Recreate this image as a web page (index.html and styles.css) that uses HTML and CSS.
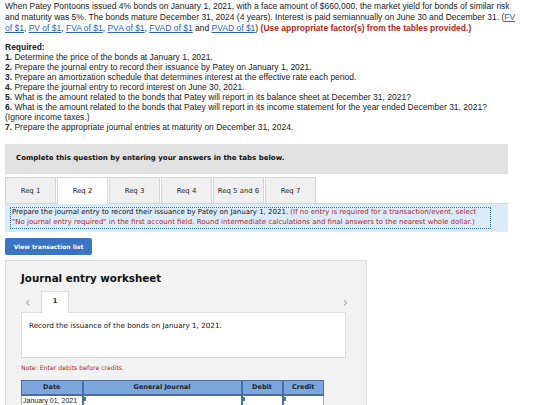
FILE: index.html
```html
<!DOCTYPE html>
<html lang="en">
<head>
    <meta charset="UTF-8">
    <meta name="viewport" content="width=device-width, initial-scale=1.0">
    <title>Bonds - Patey Pontoons</title>
    <link rel="stylesheet" href="styles.css">
</head>
<body>
    <div class="question">
        <p class="intro">
            When Patey Pontoons issued 4% bonds on January 1, 2021, with a face amount of $660,000, the market yield for bonds of similar risk
            and maturity was 5%. The bonds mature December 31, 2024 (4 years). Interest is paid semiannually on June 30 and December 31. (<a href="#">FV
            of $1</a>, <a href="#">PV of $1</a>, <a href="#">FVA of $1</a>, <a href="#">PVA of $1</a>, <a href="#">FVAD of $1</a> and <a href="#">PVAD of $1</a>) <strong class="warn">(Use appropriate factor(s) from the tables provided.)</strong>
        </p>

        <div class="required">
            <strong>Required:</strong>
            <ol>
                <li><b>1.</b> Determine the price of the bonds at January 1, 2021.</li>
                <li><b>2.</b> Prepare the journal entry to record their issuance by Patey on January 1, 2021.</li>
                <li><b>3.</b> Prepare an amortization schedule that determines interest at the effective rate each period.</li>
                <li><b>4.</b> Prepare the journal entry to record interest on June 30, 2021.</li>
                <li><b>5.</b> What is the amount related to the bonds that Patey will report in its balance sheet at December 31, 2021?</li>
                <li><b>6.</b> What is the amount related to the bonds that Patey will report in its income statement for the year ended December 31, 2021?<br>(Ignore income taxes.)</li>
                <li><b>7.</b> Prepare the appropriate journal entries at maturity on December 31, 2024.</li>
            </ol>
        </div>
    </div>

    <div class="answer">
        <div class="complete">Complete this question by entering your answers in the tabs below.</div>

        <div class="tabs">
            <button class="tab">Req 1</button>
            <button class="tab active">Req 2</button>
            <button class="tab">Req 3</button>
            <button class="tab">Req 4</button>
            <button class="tab">Req 5 and 6</button>
            <button class="tab">Req 7</button>
        </div>

        <div class="instructions">
            <div class="instructions-inner">
                Prepare the journal entry to record their issuance by Patey on January 1, 2021. <span class="red">(If no entry is required for a transaction/event, select<br>
                "No journal entry required" in the first account field. Round intermediate calculations and final answers to the nearest whole dollar.)</span>
            </div>
        </div>

        <button class="btn-list">View transaction list</button>

        <div class="worksheet">
            <h2>Journal entry worksheet</h2>

            <div class="ws-nav">
                <span class="arrow">&lsaquo;</span>
                <span class="ws-tab">1</span>
                <span class="arrow right">&rsaquo;</span>
            </div>

            <div class="ws-body">Record the issuance of the bonds on January 1, 2021.</div>

            <p class="note">Note: Enter debits before credits.</p>

            <table class="journal">
                <thead>
                    <tr>
                        <th class="col-date">Date</th>
                        <th class="col-account">General Journal</th>
                        <th class="col-num">Debit</th>
                        <th class="col-num">Credit</th>
                    </tr>
                </thead>
                <tbody>
                    <tr>
                        <td class="col-date">January 01, 2021</td>
                        <td class="cell-input"></td>
                        <td class="cell-input"></td>
                        <td class="cell-input"></td>
                    </tr>
                </tbody>
            </table>
        </div>
    </div>
</body>
</html>
```

FILE: styles.css
```css
:root {
    --text: #222;
    --link: #2a64b8;
    --red: #b0281e;
    --tab-bg: #f0f0f0;
    --tab-border: #d6d6d6;
    --panel: #f2f2f2;
}

* {
    margin: 0;
    padding: 0;
    box-sizing: border-box;
}

body {
    font-family: 'Liberation Sans', Arial, sans-serif;
    color: var(--text);
    background: #fff;
    padding: 1px 5px 0;
    width: 560px;
    height: 405px;
    overflow: hidden;
}

/* question text */
.question {
    width: 512px;
    font-size: 8.5px;
    line-height: 11px;
}

.intro a {
    color: var(--link);
    text-decoration: underline;
}

.warn {
    color: var(--red);
}

.required {
    margin-top: 8px;
    line-height: 10px;
}

.required ol {
    list-style: none;
}

/* answer area */
.answer {
    margin-top: 12px;
    font-family: 'DejaVu Sans', Verdana, sans-serif;
}

.complete {
    width: 503px;
    height: 30px;
    background: #e1e1e1;
    font-size: 7px;
    font-weight: bold;
    padding: 10px 0 0 11px;
    color: #111;
}

.tabs {
    display: flex;
    gap: 1px;
    margin-top: 3px;
    height: 26px;
}

.tab {
    width: 51px;
    background: var(--tab-bg);
    border: 1px solid var(--tab-border);
    border-bottom: none;
    font-family: inherit;
    font-size: 6.9px;
    color: #222;
}

.tab.active {
    background: #fff;
    height: 27px;
    position: relative;
    z-index: 1;
}

.instructions {
    width: 503px;
    height: 29px;
    background: #dcebf9;
    border-top: 1px solid var(--tab-border);
    padding: 3px 5px;
}

.instructions-inner {
    border: 1px dotted #3a6fb0;
    height: 22px;
    font-size: 7px;
    line-height: 9.5px;
    padding: 0 0 0 1px;
    color: #111;
    width: 481px;
    white-space: nowrap;
}

.red {
    color: var(--red);
}

.btn-list {
    display: block;
    margin-top: 6px;
    width: 87px;
    height: 17px;
    background: #3a74c2;
    color: #fff;
    border: none;
    border-radius: 2px;
    font-family: inherit;
    font-size: 6px;
    font-weight: bold;
}

/* journal entry worksheet */
.worksheet {
    margin-top: 5px;
    width: 362px;
    height: 150px;
    background: var(--panel);
    border: 1px solid #dedede;
    border-bottom: none;
    padding: 10px 0 0 15px;
}

.worksheet h2 {
    font-size: 10.3px;
    font-weight: bold;
    color: #111;
    line-height: 14px;
}

.ws-nav {
    display: flex;
    align-items: flex-end;
    margin-top: 6px;
    height: 21px;
    width: 329px;
}

.arrow {
    color: #aaa;
    font-size: 14px;
    line-height: 14px;
    width: 20px;
    padding-left: 4px;
    align-self: center;
}

.arrow.right {
    margin-left: auto;
    width: auto;
    padding: 0 2px 0 0;
}

.ws-tab {
    width: 28px;
    height: 22px;
    background: #fff;
    border: 1px solid #ddd;
    border-bottom: none;
    font-size: 6.6px;
    font-weight: bold;
    text-align: center;
    line-height: 19px;
    position: relative;
    top: 1px;
}

.ws-body {
    width: 325px;
    height: 46px;
    background: #fff;
    border: 1px solid #ddd;
    font-size: 7.2px;
    padding: 8px 0 0 7px;
    color: #111;
}

.note {
    margin-top: 6px;
    font-size: 6.2px;
    color: var(--red);
}

.journal {
    margin-top: 9px;
    border-collapse: collapse;
    font-size: 6.5px;
}

.journal th {
    height: 14px;
    background: #7ba7de;
    border: 1px solid #4b6f9c;
    border-bottom: 2px solid #4b6f9c;
    color: #222;
    font-weight: bold;
}

.journal th + th {
    border-left: 2px solid #4b6f9c;
}

.col-date {
    width: 61px;
}

.col-account {
    width: 159px;
}

.col-num {
    width: 41px;
}

.journal td {
    height: 11px;
    background: #fff;
    border: 1px solid #aaa;
    border-top: none;
}

.journal td.col-date {
    font-family: 'Liberation Sans', Arial, sans-serif;
    font-size: 7px;
    padding-left: 1px;
    white-space: nowrap;
}

.cell-input {
    border-left: 2px solid #4b6f9c !important;
    position: relative;
}

/* small blue corner marker on editable cells */
.cell-input::before {
    content: '';
    position: absolute;
    top: 1px;
    left: 0;
    width: 2px;
    height: 4px;
    background: #3a74c2;
}
```
